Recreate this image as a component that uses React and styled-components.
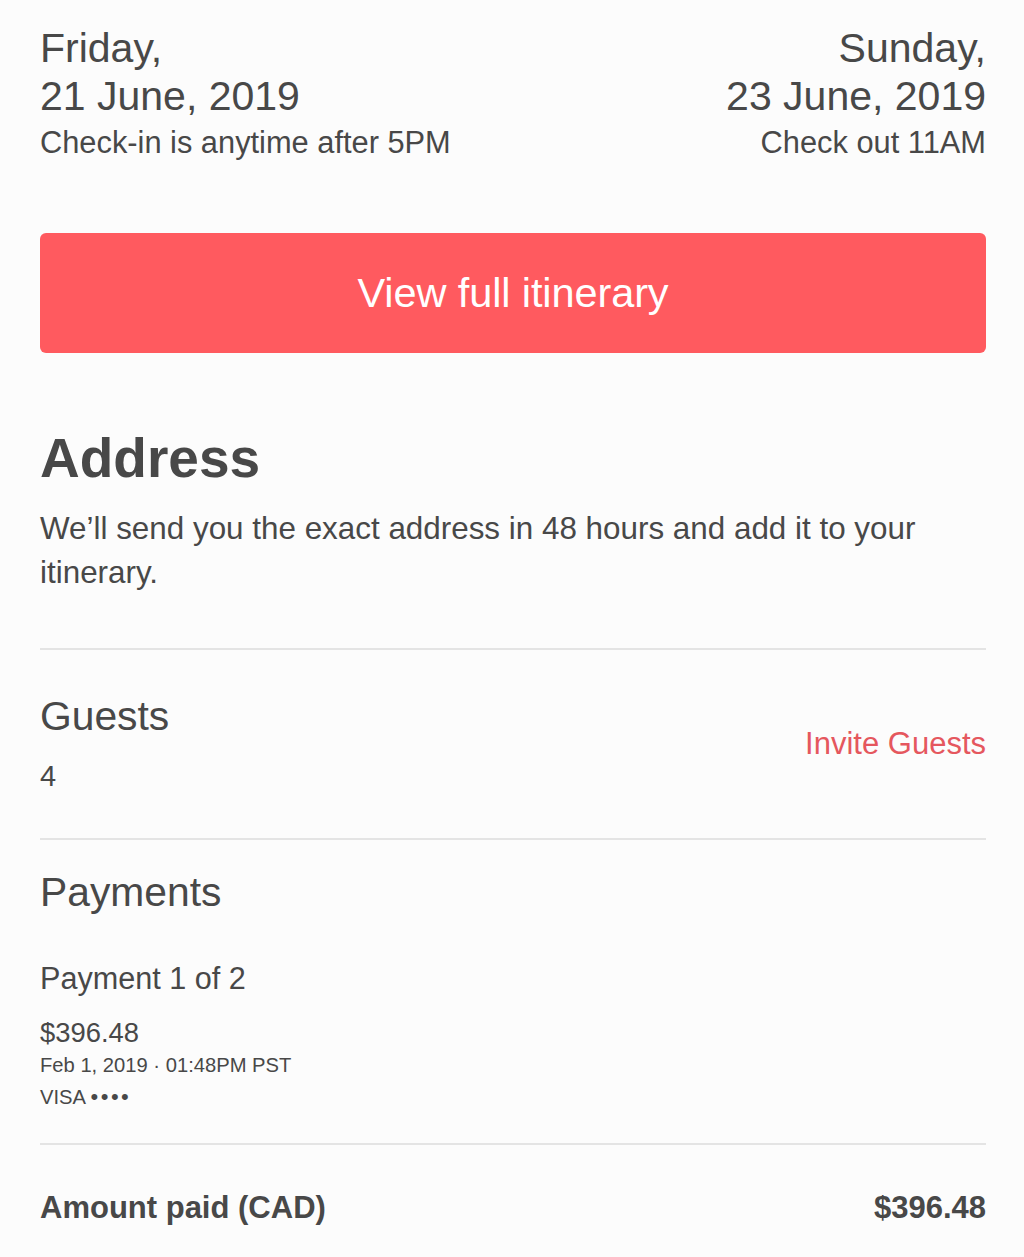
import React from "react";
import styled, { createGlobalStyle } from "styled-components";

const GlobalStyle = createGlobalStyle`
  html, body {
    margin: 0;
    padding: 0;
    background: #fcfcfc;
  }
  body {
    font-family: "Liberation Sans", Arial, Helvetica, sans-serif;
    color: #484848;
  }
`;

export default function App() {
  return (
    <>
      <GlobalStyle />
      <Page>
        <Dates>
          <DateBlock>
            <DateLine>Friday,</DateLine>
            <DateLine>21 June, 2019</DateLine>
            <DateNote>Check-in is anytime after 5PM</DateNote>
          </DateBlock>
          <DateBlock $right>
            <DateLine>Sunday,</DateLine>
            <DateLine>23 June, 2019</DateLine>
            <DateNote>Check out 11AM</DateNote>
          </DateBlock>
        </Dates>

        <ItineraryButton>View full itinerary</ItineraryButton>

        <AddressTitle>Address</AddressTitle>
        <AddressText>
          We’ll send you the exact address in 48 hours and add it to your
          itinerary.
        </AddressText>

        <Divider $top={53} />

        <GuestsRow>
          <div>
            <SectionTitle>Guests</SectionTitle>
            <GuestCount>4</GuestCount>
          </div>
          <InviteLink>Invite Guests</InviteLink>
        </GuestsRow>

        <Divider />

        <PaymentsSection>
          <SectionTitle>Payments</SectionTitle>
          <PaymentLabel>Payment 1 of 2</PaymentLabel>
          <PaymentAmount>$396.48</PaymentAmount>
          <PaymentMeta>Feb 1, 2019 · 01:48PM PST</PaymentMeta>
          <PaymentMeta>
            VISA <Dots>••••</Dots>
          </PaymentMeta>
        </PaymentsSection>

        <Divider />

        <TotalRow>
          <span>Amount paid (CAD)</span>
          <span>$396.48</span>
        </TotalRow>
      </Page>
    </>
  );
}

const Page = styled.div`
  width: 946px;
  padding: 24px 38px 30px 40px;
  display: flex;
  flex-direction: column;
`;

const Dates = styled.div`
  display: flex;
  justify-content: space-between;
`;

const DateBlock = styled.div`
  display: flex;
  flex-direction: column;
  align-items: ${({ $right }) => ($right ? "flex-end" : "flex-start")};
  text-align: ${({ $right }) => ($right ? "right" : "left")};
`;

const DateLine = styled.div`
  font-size: 41px;
  line-height: 48px;
`;

const DateNote = styled.div`
  font-size: 30.8px;
  line-height: 36px;
  margin-top: 5px;
`;

const ItineraryButton = styled.button`
  margin-top: 72px;
  height: 120px;
  width: 100%;
  border: none;
  border-radius: 6px;
  background: #ff5a5f;
  color: #ffffff;
  font-family: "Liberation Sans", Arial, sans-serif;
  font-size: 41.5px;
  letter-spacing: -0.1px;
  cursor: pointer;
`;

const AddressTitle = styled.h2`
  margin: 73px 0 0;
  font-size: 55px;
  line-height: 64px;
  font-weight: 700;
`;

const AddressText = styled.p`
  margin: 17px 0 0;
  font-size: 31.4px;
  line-height: 44px;
`;

const Divider = styled.hr`
  margin: ${({ $top }) => ($top ? `${$top}px` : "0")} 0 0;
  border: none;
  height: 2px;
  background: #e4e4e4;
`;

const GuestsRow = styled.div`
  display: flex;
  justify-content: space-between;
  align-items: center;
  padding: 44px 0 44px;
`;

const SectionTitle = styled.div`
  font-size: 40.8px;
  line-height: 44px;
`;

const GuestCount = styled.div`
  margin-top: 20px;
  font-size: 29px;
  line-height: 36px;
`;

const InviteLink = styled.a`
  color: #e5575e;
  font-size: 31px;
  line-height: 36px;
  cursor: pointer;
`;

const PaymentsSection = styled.div`
  display: flex;
  flex-direction: column;
  padding: 30px 0 30px;
`;

const PaymentLabel = styled.div`
  margin-top: 46px;
  font-size: 30.6px;
  line-height: 36px;
`;

const PaymentAmount = styled.div`
  margin-top: 21px;
  font-size: 27.4px;
  line-height: 32px;
`;

const PaymentMeta = styled.div`
  font-size: 20.2px;
  line-height: 32px;
  &:first-of-type {
    margin-top: 3px;
  }
`;

const Dots = styled.span`
  letter-spacing: 2.5px;
  font-size: 22px;
`;

const TotalRow = styled.div`
  display: flex;
  justify-content: space-between;
  margin-top: 45px;
  font-size: 31px;
  line-height: 36px;
  font-weight: 700;
`;
